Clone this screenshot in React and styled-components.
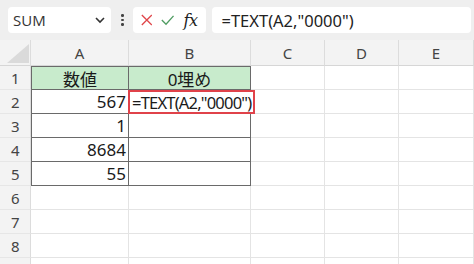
import React from "react";
import styled, { createGlobalStyle } from "styled-components";

const GlobalStyle = createGlobalStyle`
  body {
    margin: 0;
    background: #ffffff;
    font-family: "Noto Sans", "Noto Sans CJK JP", sans-serif;
  }
`;

const Frame = styled.div`
  width: 474px;
  height: 264px;
  overflow: hidden;
  background: #ffffff;
`;

const Toolbar = styled.div`
  display: flex;
  align-items: center;
  height: 40px;
  padding: 0 0 0 8px;
  background: #efefef;
  box-sizing: border-box;
`;

const Field = styled.div`
  display: flex;
  align-items: center;
  height: 26px;
  background: #ffffff;
  border-radius: 4px;
  box-sizing: border-box;
  width: ${p => p.w}px;
  margin-left: ${p => p.ml || 0}px;
  padding: 0 ${p => p.pad || 0}px;
  gap: ${p => p.gap || 0}px;
  flex-shrink: 0;
`;

const NameText = styled.span`
  flex: 1;
  font-family: "Open Sans", "Noto Sans", sans-serif;
  font-size: 15px;
  color: #333;
`;

const Dots = styled.div`
  display: flex;
  flex-direction: column;
  gap: 2px;
  margin-left: 10px;
  span {
    width: 2.5px;
    height: 2.5px;
    border-radius: 50%;
    background: #444;
  }
`;

const Fx = styled.span`
  font-family: "DejaVu Serif", "Liberation Serif", serif;
  font-style: italic;
  font-size: 16px;
  color: #222;
  letter-spacing: -0.5px;
`;

const FormulaText = styled.span`
  font-family: "Noto Sans", sans-serif;
  font-size: 16.5px;
  color: #222;
  white-space: nowrap;
`;

const Sheet = styled.div`
  display: grid;
  grid-template-columns: 31px 98px 122px 74px 74px 75px;
  grid-template-rows: 26px repeat(9, 24px);
`;

const Corner = styled.div`
  position: relative;
  background: #f3f3f3;
  border-right: 1px solid #dcdcdc;
  border-bottom: 1px solid #d6d6d6;
  &::after {
    content: "";
    position: absolute;
    right: 1px;
    bottom: 2px;
    border-style: solid;
    border-width: 0 0 19px 22px;
    border-color: transparent transparent #dadada transparent;
  }
`;

const ColHead = styled.div`
  display: flex;
  align-items: center;
  justify-content: center;
  background: #f3f3f3;
  border-right: 1px solid #dcdcdc;
  border-bottom: 1px solid #d6d6d6;
  font-family: "Noto Sans", sans-serif;
  font-size: 15px;
  color: #444;
`;

const RowHead = styled.div`
  display: flex;
  align-items: center;
  padding-left: 11px;
  background: #f3f3f3;
  border-right: 1px solid #dcdcdc;
  border-bottom: 1px solid #e6e6e6;
  font-family: "Noto Sans", sans-serif;
  font-size: 15px;
  color: #444;
`;

const Cell = styled.div`
  position: relative;
  display: flex;
  align-items: center;
  justify-content: ${p => (p.center ? "center" : "flex-end")};
  padding: 0 2px;
  box-sizing: border-box;
  background: ${p => (p.head ? "#c8ebcc" : "#ffffff")};
  border-right: 1px solid ${p => (p.table ? "#6a6a6a" : "#e4e4e4")};
  border-bottom: 1px solid ${p => (p.table ? "#6a6a6a" : "#e4e4e4")};
  border-left: ${p => (p.first ? "1px solid #6a6a6a" : "none")};
  border-top: ${p => (p.top ? "1px solid #6a6a6a" : "none")};
  font-family: "Noto Sans", "Noto Sans CJK JP", sans-serif;
  font-size: 17px;
  color: #1a1a1a;
  white-space: nowrap;
`;

const Highlight = styled.span`
  position: absolute;
  left: -1px;
  top: 0;
  height: 24px;
  padding: 0 2px 0 2px;
  display: flex;
  align-items: center;
  border: 2px solid #e0424a;
  box-sizing: border-box;
  background: #ffffff;
  font-family: "Noto Sans", sans-serif;
  font-size: 16.5px;
  letter-spacing: -0.8px;
  color: #1a1a1a;
  z-index: 2;
`;

const Cross = () => (
  <svg width="14" height="14" viewBox="0 0 14 14">
    <path d="M1 1 L13 13 M13 1 L1 13" stroke="#e0464a" strokeWidth="1.6" fill="none" />
  </svg>
);

const Check = () => (
  <svg width="16" height="14" viewBox="0 0 16 14">
    <path d="M1 7 L6 12 L15 2" stroke="#4f9c62" strokeWidth="1.6" fill="none" />
  </svg>
);

const Chevron = () => (
  <svg width="12" height="8" viewBox="0 0 12 8">
    <path d="M2 2 L6 6 L10 2" stroke="#333" strokeWidth="1.6" fill="none" />
  </svg>
);

const cols = ["A", "B", "C", "D", "E"];
const data = [
  ["数値", "0埋め"],
  ["567", ""],
  ["1", ""],
  ["8684", ""],
  ["55", ""],
];

export default function App() {
  return (
    <Frame>
      <GlobalStyle />
      <Toolbar>
        <Field w={103} pad={5}>
          <NameText>SUM</NameText>
          <Chevron />
        </Field>
        <Dots>
          <span />
          <span />
          <span />
        </Dots>
        <Field w={73} ml={9} pad={8} gap={9}>
          <Cross />
          <Check />
          <Fx>fx</Fx>
        </Field>
        <Field w={259} ml={6} pad={10}>
          <FormulaText>=TEXT(A2,"0000")</FormulaText>
        </Field>
      </Toolbar>
      <Sheet>
        <Corner />
        {cols.map((c, i) => (
          <ColHead key={i}>{c}</ColHead>
        ))}
        {Array.from({ length: 9 }).map((_, r) => (
          <React.Fragment key={r}>
            <RowHead>{r < 8 ? r + 1 : ""}</RowHead>
            {cols.map((_, c) => {
              const inTable = r < 5 && c < 2;
              if (!inTable) return <Cell key={c} />;
              const isHead = r === 0;
              return (
                <Cell
                  key={c}
                  table
                  head={isHead}
                  center={isHead}
                  first={c === 0}
                  top={r === 0}
                >
                  {r === 1 && c === 1 ? (
                    <Highlight>=TEXT(A2,"0000")</Highlight>
                  ) : (
                    data[r][c]
                  )}
                </Cell>
              );
            })}
          </React.Fragment>
        ))}
      </Sheet>
    </Frame>
  );
}
